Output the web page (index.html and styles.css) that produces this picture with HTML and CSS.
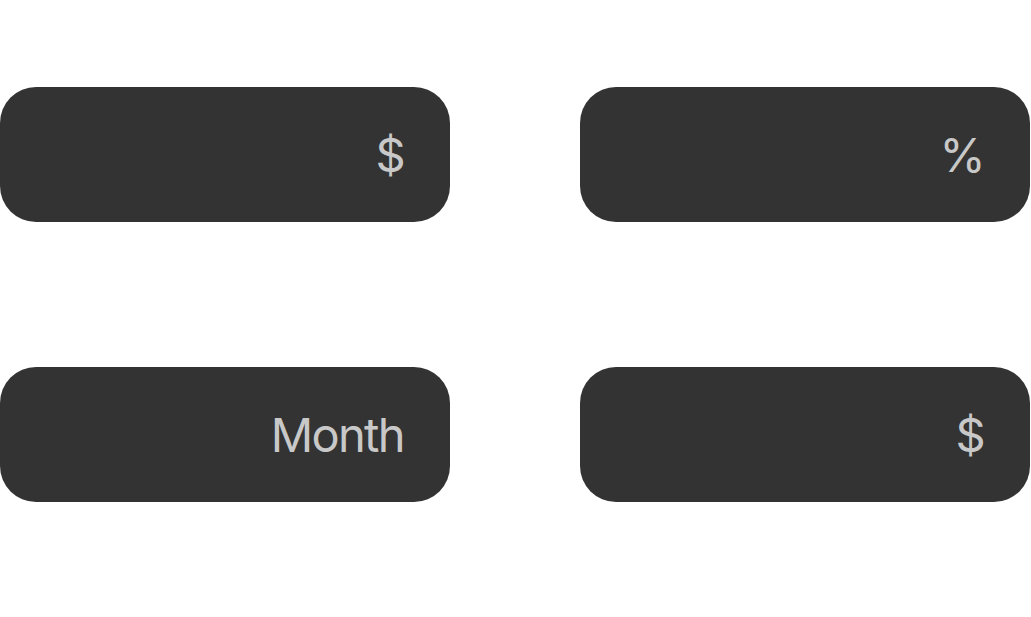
FILE: index.html
```html
<!DOCTYPE html>
<html>
<head>
<meta charset="utf-8">
<link rel="stylesheet" href="styles.css">
</head>
<body>
<div class="grid">
  <div class="field"><span class="unit">$</span></div>
  <div class="field"><span class="unit">%</span></div>
  <div class="field"><span class="unit">Month</span></div>
  <div class="field"><span class="unit">$</span></div>
</div>
</body>
</html>
```
FILE: styles.css
```css
html, body {
  margin: 0;
  padding: 0;
  background: #ffffff;
}
.grid {
  display: grid;
  grid-template-columns: 450px 450px;
  column-gap: 130px;
  row-gap: 145px;
  padding-top: 87px;
}
.field {
  height: 135px;
  background: #333333;
  border-radius: 36px;
  display: flex;
  align-items: center;
  justify-content: flex-end;
  padding-right: 46px;
}
.unit {
  font-family: Inter, "Noto Sans", sans-serif;
  font-size: 47px;
  letter-spacing: -0.035em;
  color: #c8c8c8;
  line-height: 1;
}
```
